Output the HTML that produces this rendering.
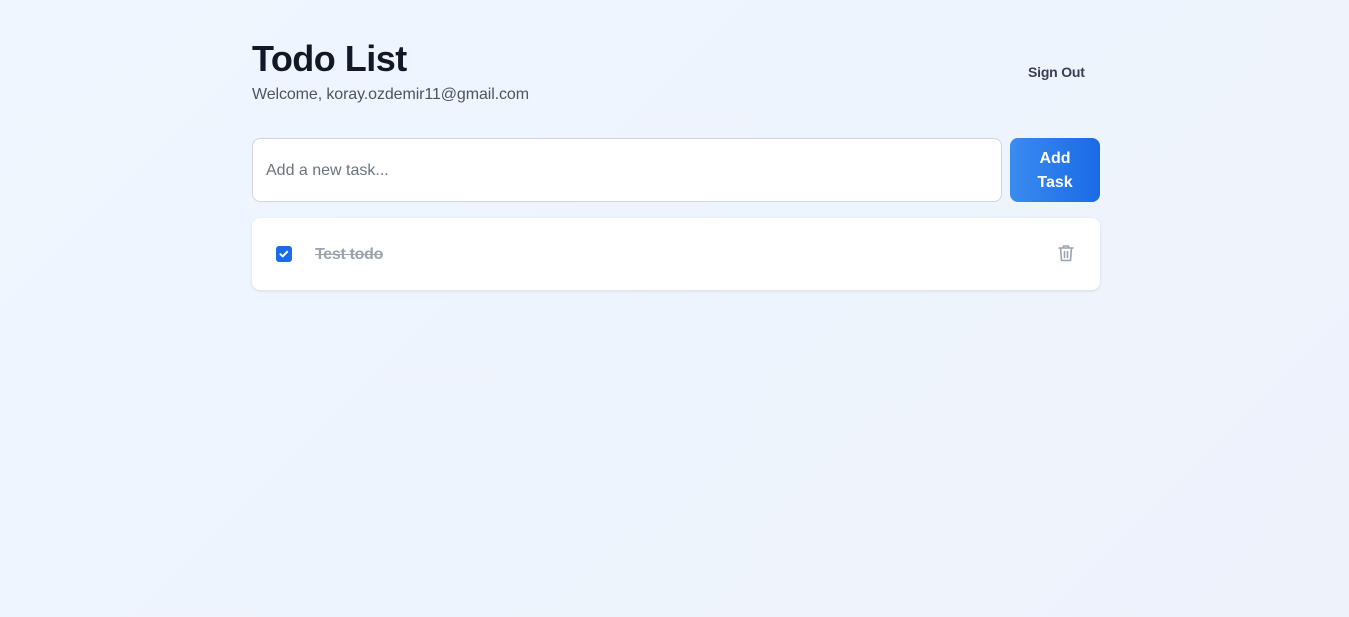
<!DOCTYPE html>
<html><head><style>
*{box-sizing:border-box;margin:0;padding:0}
body{width:1349px;height:617px;background:linear-gradient(135deg,#eff6ff,#eef2fb);font-family:"Liberation Sans",sans-serif;position:relative;overflow:hidden}
h1{position:absolute;left:252px;top:38px;font-size:36px;font-weight:700;color:#111827;letter-spacing:-0.5px}
.welcome{position:absolute;left:252px;top:86px;font-size:16px;color:#4b5563;letter-spacing:-0.1px}
.signout{position:absolute;left:1028px;top:64px;font-size:14px;font-weight:700;color:#374151;letter-spacing:-0.2px}
.input{position:absolute;left:252px;top:138px;width:750px;height:64px;background:#fff;border:1px solid #d1d5db;border-radius:8px;padding-left:13px;line-height:64px;font-size:16px;color:#6b7280}
.btn{position:absolute;left:1010px;top:138px;width:90px;height:64px;border-radius:8px;background:linear-gradient(90deg,#3b8bf0,#1a6ae6);color:#fff;font-weight:700;font-size:16px;text-align:center;line-height:24px;padding-top:9px}
.card{position:absolute;left:252px;top:218px;width:848px;height:72px;background:#fff;border-radius:8px;box-shadow:0 1px 3px rgba(0,0,0,.1)}
.cb{position:absolute;left:24px;top:28px;width:16px;height:16px;border-radius:3px;background:#1a6be6}
.txt{position:absolute;left:63px;top:28px;font-size:16px;color:#9ca3af;text-decoration:line-through;font-weight:700;letter-spacing:-0.3px}
.trash{position:absolute;left:805px;top:25px}
</style></head><body>
<h1>Todo List</h1>
<div class="welcome">Welcome, koray.ozdemir11@gmail.com</div>
<div class="signout">Sign Out</div>
<div class="input">Add a new task...</div>
<div class="btn">Add<br>Task</div>
<div class="card">
<div class="cb"><svg width="16" height="16" viewBox="0 0 16 16"><path d="M4.5 8.2l2.2 2.2 4.5-4.6" stroke="#fff" stroke-width="2" fill="none" stroke-linecap="round" stroke-linejoin="round"/></svg></div>
<div class="txt">Test todo</div>
<svg class="trash" width="18" height="20" viewBox="0 0 18 20" fill="none" stroke="#9ca3af" stroke-width="1.6" stroke-linecap="round" stroke-linejoin="round"><path d="M2 5h14M6.5 5V3h5v2M3.5 5l1 12.5h9l1-12.5M7.5 8.5v6M10.5 8.5v6"/></svg>
</div>
</body></html>
